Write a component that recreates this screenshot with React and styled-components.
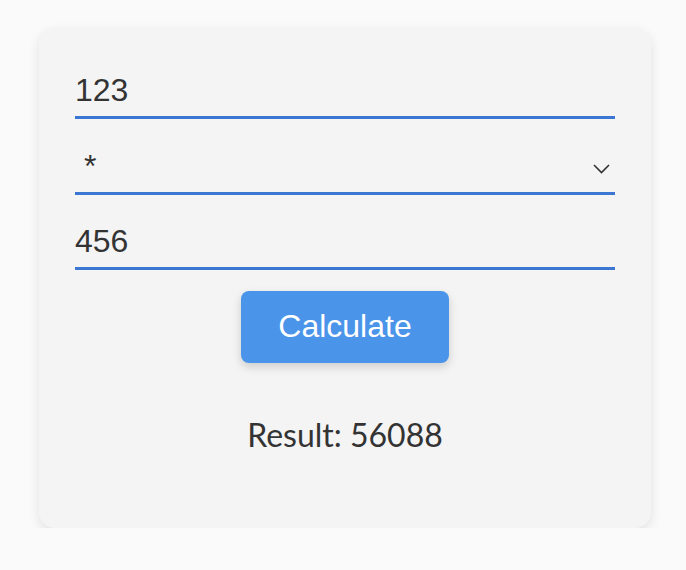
import React, { useState } from "react";
import styled, { createGlobalStyle } from "styled-components";

const GlobalStyle = createGlobalStyle`
  html, body {
    margin: 0;
    padding: 0;
    background: #fafafa;
  }
  body {
    font-family: "Liberation Sans", Arial, sans-serif;
    color: #333;
  }
`;

const Page = styled.div`
  display: flex;
  justify-content: center;
  padding: 28px 0 0 4px;
`;

const Card = styled.div`
  width: 612px;
  box-sizing: border-box;
  padding: 29px 36px 74px;
  background: #f4f4f4;
  border-radius: 16px;
  box-shadow: 0 4px 12px rgba(0, 0, 0, 0.1);
  display: flex;
  flex-direction: column;
  gap: 13.5px;
`;

const Field = styled.input`
  display: block;
  width: 100%;
  box-sizing: border-box;
  padding: 15px 0 7px;
  border: none;
  border-bottom: 3px solid #3a76d2;
  background: transparent;
  font-family: "Liberation Sans", Arial, sans-serif;
  font-size: 32px;
  line-height: 37px;
  height: 62px;
  color: #333;
  outline: none;
`;

const SelectWrap = styled.div`
  position: relative;
`;

const Select = styled.select`
  display: block;
  width: 100%;
  box-sizing: border-box;
  appearance: none;
  -webkit-appearance: none;
  padding: 15px 0 7px 9px;
  border: none;
  border-radius: 0;
  border-bottom: 3px solid #3a76d2;
  background: transparent;
  font-family: "Liberation Sans", Arial, sans-serif;
  font-size: 32px;
  line-height: 37px;
  height: 62px;
  color: #333;
  outline: none;
`;

const Chevron = styled.svg`
  position: absolute;
  right: 5px;
  top: 31px;
  pointer-events: none;
`;

const Button = styled.button`
  align-self: center;
  margin-top: 7px;
  width: 208px;
  height: 72px;
  border: none;
  border-radius: 8px;
  background: #4a94ea;
  color: #fff;
  font-family: "Liberation Sans", Arial, sans-serif;
  font-size: 32px;
  box-shadow: 0 4px 10px rgba(0, 0, 0, 0.16);
  cursor: pointer;
`;

const Result = styled.div`
  margin-top: 39px;
  text-align: center;
  font-family: Lato, "Noto Sans", sans-serif;
  font-size: 32px;
  color: #333;
`;

export default function App() {
  const [a, setA] = useState("123");
  const [op, setOp] = useState("*");
  const [b, setB] = useState("456");
  const [result, setResult] = useState(56088);

  const calculate = () => {
    const x = parseFloat(a);
    const y = parseFloat(b);
    if (op === "+") setResult(x + y);
    else if (op === "-") setResult(x - y);
    else if (op === "*") setResult(x * y);
    else setResult(x / y);
  };

  return (
    <>
      <GlobalStyle />
      <Page>
        <Card>
          <Field value={a} onChange={(e) => setA(e.target.value)} />
          <SelectWrap>
            <Select value={op} onChange={(e) => setOp(e.target.value)}>
              <option value="+">+</option>
              <option value="-">-</option>
              <option value="*">*</option>
              <option value="/">/</option>
            </Select>
            <Chevron width="17" height="10" viewBox="0 0 17 10">
              <path d="M1 1 L8.5 8.5 L16 1" fill="none" stroke="#333" strokeWidth="1.6" />
            </Chevron>
          </SelectWrap>
          <Field value={b} onChange={(e) => setB(e.target.value)} />
          <Button onClick={calculate}>Calculate</Button>
          <Result>Result: {result}</Result>
        </Card>
      </Page>
    </>
  );
}
